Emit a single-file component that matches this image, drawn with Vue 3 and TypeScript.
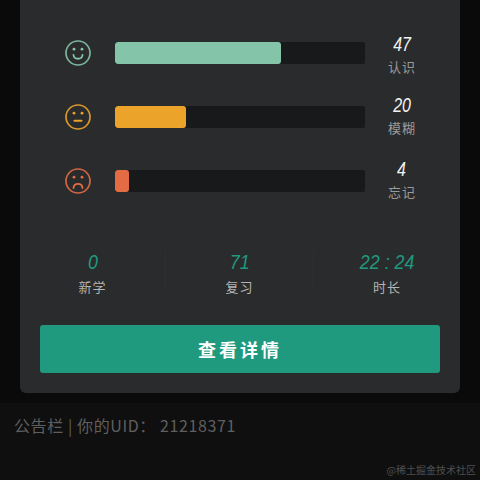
<script setup lang="ts">
interface Row { name: string; value: number; pct: number; color: string; mouth: string; mouthWidth: number }
const rows: Row[] = [
  { name: '认识', value: 47, pct: 66.4, color: '#84c4a9', mouth: 'M8.5 15c.6 5 8.4 5 9 0', mouthWidth: 1.8 },
  { name: '模糊', value: 20, pct: 28.4, color: '#eba32a', mouth: 'M9.5 16.8h7', mouthWidth: 2.1 },
  { name: '忘记', value: 4, pct: 5.6, color: '#e36c44', mouth: 'M8.5 20c.4-5.6 8.6-5.6 9 0', mouthWidth: 1.8 },
]
const stats = [
  { name: '新学', value: '0' },
  { name: '复习', value: '71' },
  { name: '时长', value: '22 : 24' },
]
</script>

<template>
  <div class="page">
    <div class="top">
      <section class="card">
        <div class="rows">
          <div v-for="r in rows" :key="r.name" class="row">
            <svg class="face" viewBox="0 0 26 26" fill="none" :stroke="r.color" stroke-linecap="round">
              <circle cx="13" cy="13" r="12" stroke-width="1.7" opacity="0.9" />
              <circle cx="9" cy="9.2" r="1.4" :fill="r.color" stroke="none" />
              <circle cx="17" cy="9.2" r="1.4" :fill="r.color" stroke="none" />
              <path :d="r.mouth" :stroke-width="r.mouthWidth" />
            </svg>
            <div class="track">
              <div class="fill" :style="{ width: r.pct + '%', background: r.color }"></div>
            </div>
            <div class="count">
              <span class="num">{{ r.value }}</span>
              <span class="lab">{{ r.name }}</span>
            </div>
          </div>
        </div>
        <div class="stats">
          <div v-for="s in stats" :key="s.name" class="stat">
            <span class="stat-num">{{ s.value }}</span>
            <span class="stat-lab">{{ s.name }}</span>
          </div>
        </div>
        <button class="btn">查看详情</button>
      </section>
    </div>
    <p class="notice">公告栏 | 你的UID： 21218371</p>
    <span class="mark">@稀土掘金技术社区</span>
  </div>
</template>

<style>
html, body { margin: 0; background: #0f0f10; }
</style>

<style scoped>
.page {
  position: relative;
  width: 480px;
  height: 480px;
  overflow: hidden;
  background: #0f0f10;
  font-family: "Noto Sans CJK SC", "Liberation Sans", sans-serif;
}
.top {
  height: 403px;
  box-sizing: border-box;
  padding: 0 20px 10px;
  background: #0a0a0a;
}
.card {
  height: 393px;
  box-sizing: border-box;
  background: #2a2b2d;
  border-radius: 0 0 6px 6px;
  padding: 42px 20px 20px;
  display: flex;
  flex-direction: column;
}
.rows { display: flex; flex-direction: column; gap: 42.2px; }
.row {
  display: grid;
  grid-template-columns: 50px 250px 74px;
  grid-template-rows: 22px;
  align-items: center;
  margin-left: 25px;
  margin-right: -20px;
}
.face { width: 26px; height: 26px; }
.track { height: 22px; background: #18191a; border-radius: 2px; overflow: hidden; }
.fill { height: 100%; border-radius: 3px; }
.count { display: flex; flex-direction: column; align-items: center; margin-top: 2px; }
.row:nth-child(2) .count { margin-top: -4px; }
.row:nth-child(3) .count { margin-top: -5px; }
.num { color: #f2f2f2; font-size: 20px; line-height: 24px; font-style: italic; font-family: "Liberation Sans", sans-serif; transform: scaleX(.8); }
.lab { color: #9a9a9a; font-size: 13px; line-height: 18px; letter-spacing: 1px; margin-top: 2px; }
.stats {
  display: grid;
  grid-template-columns: 145px 148px 147px;
  margin: 57.6px -20px 0;
}
.stat { display: flex; flex-direction: column; align-items: center; border-left: 1px solid #2e2f31; height: 42px; }
.stat:first-child { border-left: 0; }
.stat-num { color: #1f9a7e; font-size: 21px; line-height: 24px; font-style: italic; font-family: "Liberation Sans", sans-serif; transform: scaleX(.85); }
.stat-lab { color: #b4b4b4; font-size: 13px; line-height: 22px; letter-spacing: 1px; margin-top: 2px; }
.btn {
  margin-top: auto;
  height: 48px;
  border: 0;
  border-radius: 3px;
  background: #1f9a7e;
  color: #fff;
  font: 700 18px "Noto Sans CJK SC", sans-serif;
  letter-spacing: 3px;
  padding: 0;
}
.notice {
  margin: 11px 0 0 14px;
  color: #5f5f5f;
  font-size: 16px;
  line-height: 22px;
  letter-spacing: .6px;
}
.mark {
  position: absolute;
  right: 4px;
  bottom: 3px;
  color: #4f4f4f;
  font-family: "Noto Sans CJK SC", serif;
  font-size: 10px;
  line-height: 14px;
}
</style>
